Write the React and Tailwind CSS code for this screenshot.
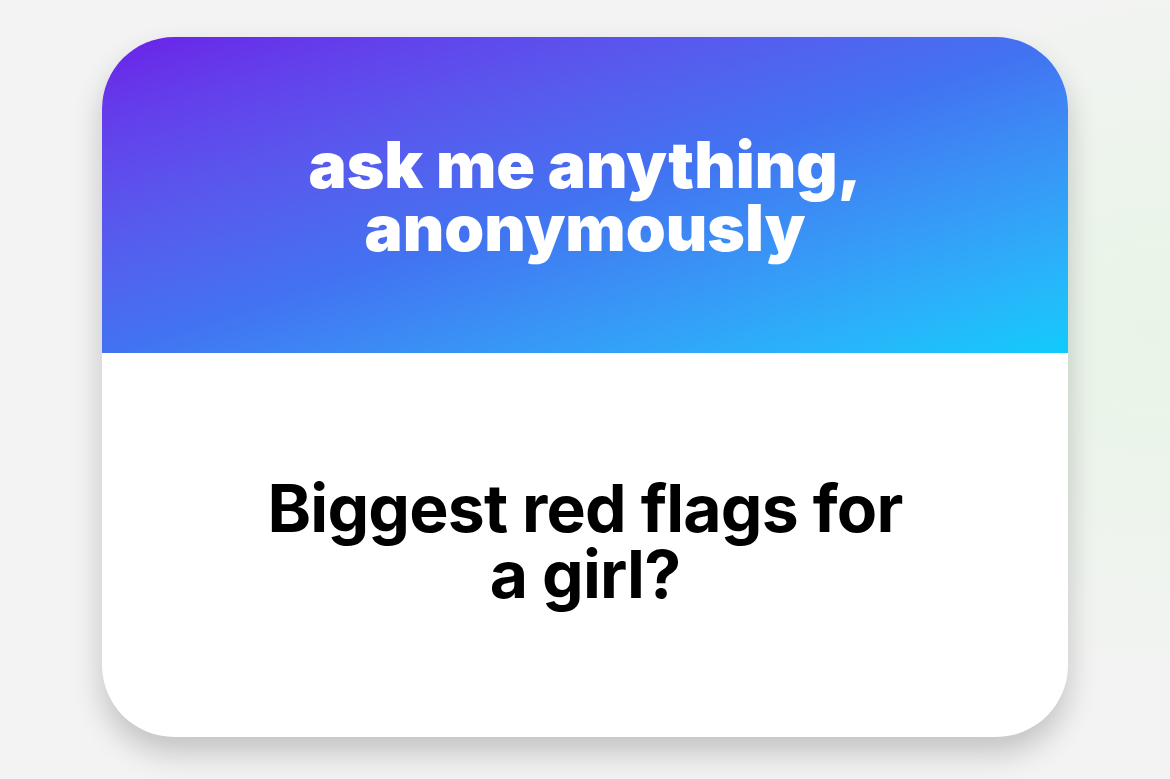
export default function App() {
  return (
    <div className="w-[1170px] h-[779px] overflow-hidden bg-[#f3f3f3] bg-[radial-gradient(ellipse_320px_360px_at_1150px_330px,#e8f5e6,transparent)] pt-[37px] pl-[102px]">
      <div className="w-[966px] h-[700px] rounded-[72px] overflow-hidden bg-white flex flex-col shadow-[0_16px_30px_rgba(0,0,0,0.2)]">
        <div className="h-[316px] shrink-0 bg-linear-to-br from-[#6a1ee8] via-[#4272f1] to-[#0ecbfc] flex items-center justify-center pt-[2px]">
          <h1 className="text-center text-white font-['Inter',sans-serif] font-black text-[64px] leading-[63px] tracking-[0em]">
            ask me anything,<br />anonymously
          </h1>
        </div>
        <div className="flex-1 flex items-center justify-center pb-[8px]">
          <p className="text-center text-black font-['Inter',sans-serif] font-bold text-[66px] leading-[66px] tracking-[-0.012em]">
            Biggest red flags for<br />a girl?
          </p>
        </div>
      </div>
    </div>
  );
}
